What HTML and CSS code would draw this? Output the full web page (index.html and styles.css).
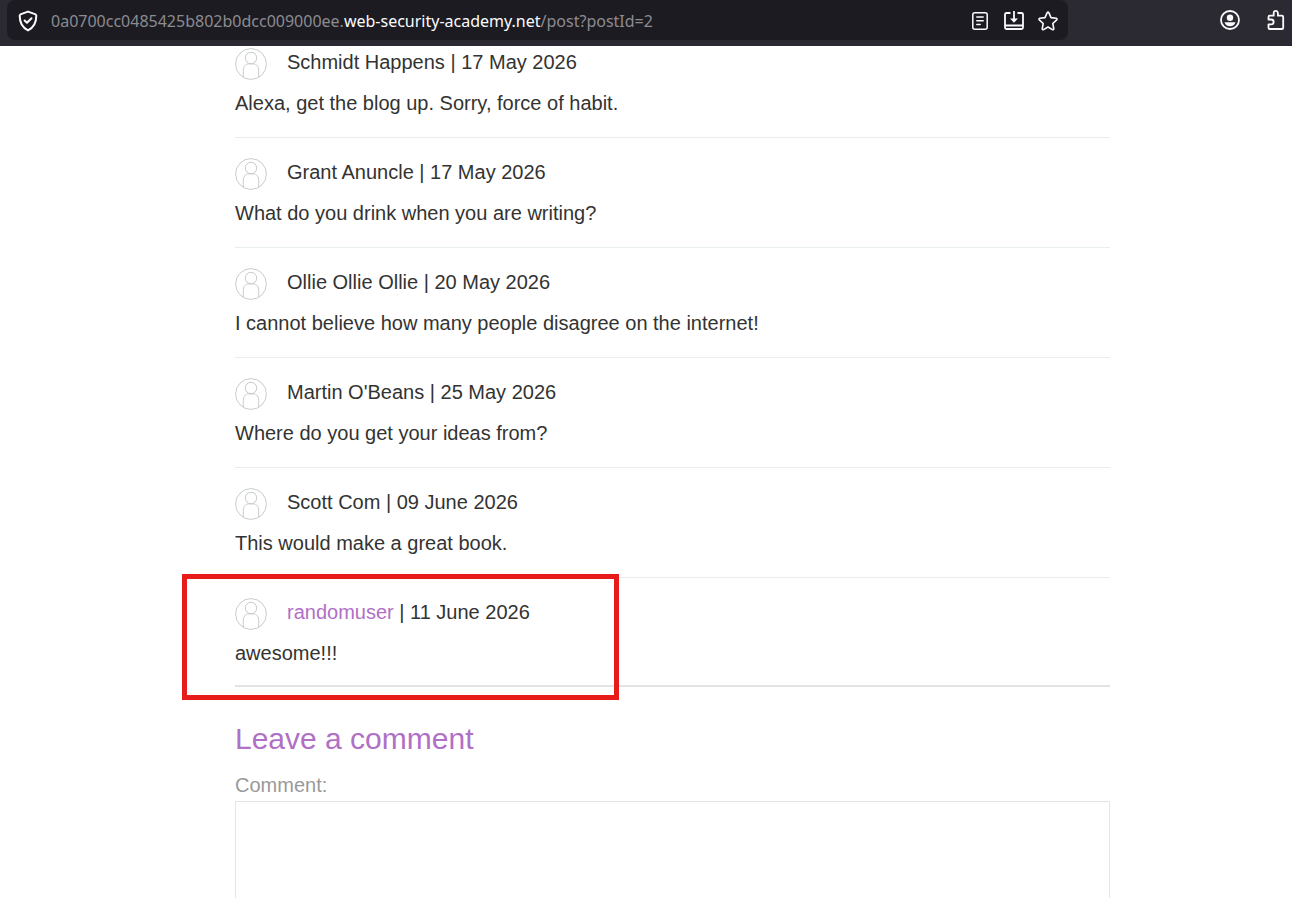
FILE: index.html
```html
<!DOCTYPE html>
<html lang="en">
<head>
  <meta charset="UTF-8">
  <meta name="viewport" content="width=device-width, initial-scale=1.0">
  <title>Blog post</title>
  <link rel="stylesheet" href="styles.css">
</head>
<body>
  <svg class="sprite" aria-hidden="true">
    <symbol id="avatar" viewBox="0 0 32 32">
      <circle cx="16" cy="16" r="15.4"/>
      <circle cx="16" cy="10" r="5.7"/>
      <path d="M8.300 29.500V22.500c0-4 2.200-6.600 5.200-6.600h5c3 0 5.200 2.600 5.200 6.600V29.500"/>
    </symbol>
  </svg>

  <header class="toolbar">
    <div class="address-bar">
      <button class="icon-button" aria-label="Site information">
        <svg width="20" height="22" viewBox="0 0 20 22" fill="none" stroke="currentColor" stroke-width="2" stroke-linejoin="round" stroke-linecap="round">
          <path d="M10 1.600L17 4.100c.8.300 1.300.9 1.300 1.700C18.300 12.500 16 17.500 10 20.400 4 17.500 1.700 12.500 1.700 5.800c0-.8.5-1.400 1.300-1.700z"/>
          <path d="M6.600 10.500l2.400 2.300 4.500-4.600"/>
        </svg>
      </button>
      <div class="url">0a0700cc0485425b802b0dcc009000ee.<span class="domain">web-security-academy.net</span>/post?postId=2</div>
      <button class="icon-button" aria-label="Reader view">
        <svg width="20" height="20" viewBox="0 0 20 20" fill="none" stroke="currentColor" stroke-width="1.500" stroke-linecap="round">
          <rect x="2.800" y="1.800" width="14.400" height="16.400" rx="2"/>
          <path d="M6.800 6h6.400M6.800 9.700h6.400M6.800 13.400h3.400"/>
        </svg>
      </button>
      <button class="icon-button" aria-label="Save page">
        <svg width="22" height="20" viewBox="0 0 22 20" fill="none" stroke="currentColor" stroke-width="1.800">
          <path d="M7.500 2H3.500Q2 2 2 3.500v13Q2 18 3.500 18h15q1.500 0 1.500-1.500v-13Q20 2 18.500 2H14.500M2 14.500h18M11 0v9"/>
          <path d="M7 7.500h8l-4 4.200z" fill="currentColor" stroke="none"/>
        </svg>
      </button>
      <button class="icon-button" aria-label="Bookmark this page">
        <svg width="20" height="20" viewBox="0 0 20 20" fill="none" stroke="currentColor" stroke-width="1.600" stroke-linejoin="round">
          <path d="M9.200 1.700q.8-1.200 1.600 0l2.200 4.900 5.300.7q1.200.4.400 1.500l-3.900 3.700 1 5.300q-.1 1.300-1.400.8L10 16l-4.400 2.600q-1.300.5-1.400-.8l1-5.300-3.900-3.700q-.8-1.100.4-1.500l5.300-.7z"/>
        </svg>
      </button>
    </div>
    <div class="toolbar-actions">
      <button class="icon-button" aria-label="Account">
        <svg width="20" height="20" viewBox="0 0 20 20">
          <circle cx="10" cy="10" r="9" fill="none" stroke="currentColor" stroke-width="1.800"/>
          <circle cx="10" cy="7.800" r="3.200" fill="currentColor"/>
          <path d="M4.500 12.300h11c-.8 2.500-2.800 3.900-5.500 3.900s-4.700-1.400-5.500-3.900z" fill="currentColor"/>
        </svg>
      </button>
      <button class="icon-button" aria-label="Extensions">
        <svg width="20" height="22" viewBox="0 0 20 22" fill="none" stroke="currentColor" stroke-width="1.800" stroke-linejoin="round">
          <path d="M2.500 9.500V8q0-1.300 1.300-1.300H7.700V4a2.100 2.100 0 0 1 4.200 0v2.700h4q1.300 0 1.300 1.300v10.700q0 1.300-1.300 1.300H3.800q-1.300 0-1.300-1.300V15.300h2.700a2.400 2.400 0 0 0 0-4.800H2.500z"/>
        </svg>
      </button>
    </div>
  </header>

  <main class="page">
    <section class="comments">
      <article class="comment">
        <p class="author"><svg class="avatar"><use href="#avatar"/></svg><span>Schmidt Happens | 17 May 2026</span></p>
        <p>Alexa, get the blog up. Sorry, force of habit.</p>
      </article>
      <article class="comment">
        <p class="author"><svg class="avatar"><use href="#avatar"/></svg><span>Grant Anuncle | 17 May 2026</span></p>
        <p>What do you drink when you are writing?</p>
      </article>
      <article class="comment">
        <p class="author"><svg class="avatar"><use href="#avatar"/></svg><span>Ollie Ollie Ollie | 20 May 2026</span></p>
        <p>I cannot believe how many people disagree on the internet!</p>
      </article>
      <article class="comment">
        <p class="author"><svg class="avatar"><use href="#avatar"/></svg><span>Martin O'Beans | 25 May 2026</span></p>
        <p>Where do you get your ideas from?</p>
      </article>
      <article class="comment">
        <p class="author"><svg class="avatar"><use href="#avatar"/></svg><span>Scott Com | 09 June 2026</span></p>
        <p>This would make a great book.</p>
      </article>
      <article class="comment">
        <p class="author"><svg class="avatar"><use href="#avatar"/></svg><span><a href="#">randomuser</a> | 11 June 2026</span></p>
        <p>awesome!!!</p>
        <div class="highlight"></div>
      </article>
    </section>
    <hr>
    <form class="comment-form">
      <h2>Leave a comment</h2>
      <label for="comment">Comment:</label>
      <textarea id="comment" name="comment" rows="12"></textarea>
    </form>
  </main>
</body>
</html>
```

FILE: styles.css
```css
* {
  box-sizing: border-box;
}

body {
  display: flex;
  flex-direction: column;
  height: 100vh;
  margin: 0;
  overflow: hidden;
  background-color: #fff;
  color: #333332;
  font-family: "Liberation Sans", Arial, sans-serif;
  font-size: 20px;
  line-height: 28px;
}

.sprite {
  display: none;
}

/* Browser toolbar */
.toolbar {
  display: flex;
  flex: none;
  justify-content: space-between;
  height: 46px;
  padding: 0 6px 6px 7px;
  background-color: #2b2a33;
  color: #fbfbfe;
}

.address-bar {
  display: flex;
  flex: 0 1 1061px;
  align-items: center;
  gap: 13px;
  padding: 2px 10px 0 11px;
  border-radius: 8px;
  background-color: #1c1b22;
}

.url {
  flex: 1;
  overflow: hidden;
  color: #8c8b91;
  font-family: "Noto Sans", "Open Sans", sans-serif;
  font-size: 16px;
  white-space: nowrap;
}

.domain {
  color: #fbfbfe;
}

.icon-button {
  display: flex;
  flex: none;
  padding: 0;
  border: none;
  background: none;
  color: inherit;
  cursor: pointer;
}

.toolbar-actions {
  display: flex;
  align-items: center;
  gap: 26px;
}

/* Comments */
.page {
  padding: 2px 182px 0 235px;
}

.comment {
  position: relative;
  display: grid;
  gap: 9px;
  padding-bottom: 20px;
}

.comment + .comment {
  padding-top: 20px;
  border-top: 1px solid #e8eeee;
}

.comment:last-child {
  padding-bottom: 0;
}

.comment p {
  margin: 0;
}

.author {
  display: flex;
  gap: 20px;
}

.author a {
  color: #b070c6;
  text-decoration: none;
}

.avatar {
  width: 32px;
  height: 32px;
  fill: none;
  stroke: #c8cccc;
}

.highlight {
  position: absolute;
  top: -4px;
  left: -53px;
  width: 437px;
  height: 126px;
  border: 5px solid #e81b1b;
  pointer-events: none;
}

hr {
  height: 2px;
  margin: 18px 0 32px;
  border: none;
  background-color: #e4e4e4;
}

/* Comment form */
.comment-form h2 {
  margin: 0;
  color: #b070c6;
  font-size: 30px;
  font-weight: normal;
  line-height: 40px;
}

.comment-form label {
  display: block;
  margin-top: 12px;
  color: #999;
}

.comment-form textarea {
  display: block;
  width: 100%;
  margin-top: 2px;
  padding: 8px;
  border: 1px solid #e4e4e4;
  font: inherit;
  resize: none;
}
```
